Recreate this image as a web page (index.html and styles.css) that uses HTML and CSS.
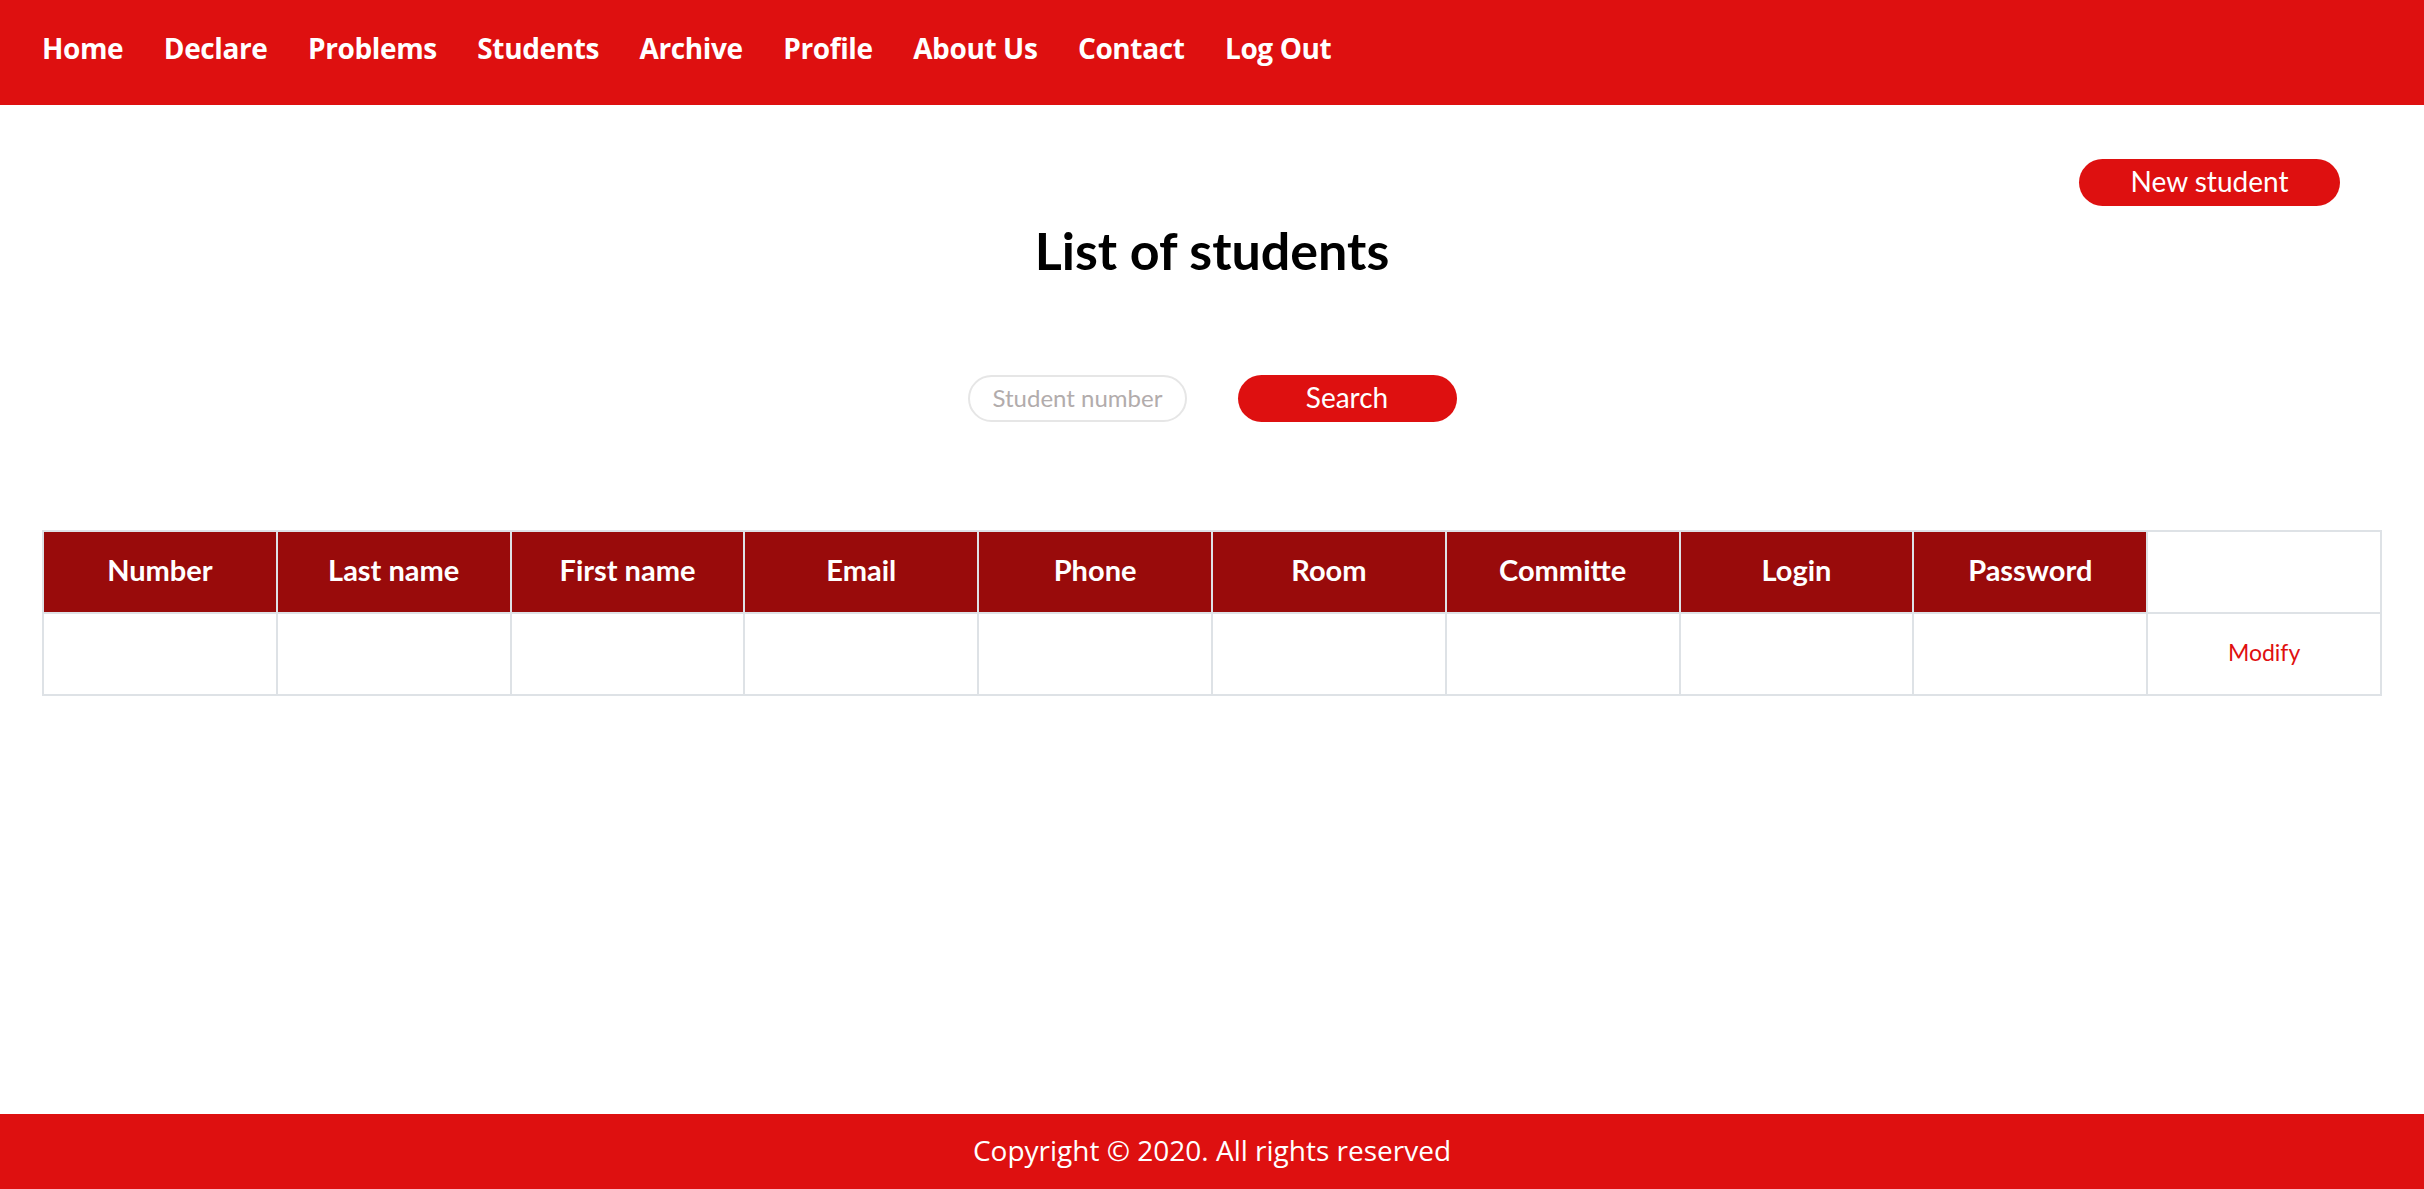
FILE: index.html
```html
<!DOCTYPE html>
<html lang="en">
<head>
<meta charset="utf-8">
<title>List of students</title>
<link rel="stylesheet" href="styles.css">
</head>
<body>
<nav class="topnav">
  <a href="#">Home</a>
  <a href="#">Declare</a>
  <a href="#">Problems</a>
  <a href="#">Students</a>
  <a href="#">Archive</a>
  <a href="#">Profile</a>
  <a href="#">About Us</a>
  <a href="#">Contact</a>
  <a href="#">Log Out</a>
</nav>
<main class="content">
  <div class="actions">
    <a class="btn btn-new" href="#">New student</a>
  </div>
  <h1 class="title">List of students</h1>
  <form class="search">
    <input class="search-input" type="text" placeholder="Student number">
    <button class="btn btn-search" type="button">Search</button>
  </form>
  <table class="students">
    <thead>
      <tr>
        <th>Number</th>
        <th>Last name</th>
        <th>First name</th>
        <th>Email</th>
        <th>Phone</th>
        <th>Room</th>
        <th>Committe</th>
        <th>Login</th>
        <th>Password</th>
        <th class="th-empty"></th>
      </tr>
    </thead>
    <tbody>
      <tr>
        <td></td><td></td><td></td><td></td><td></td>
        <td></td><td></td><td></td><td></td>
        <td class="td-action"><a class="modify" href="#">Modify</a></td>
      </tr>
    </tbody>
  </table>
</main>
<footer class="footer">Copyright © 2020. All rights reserved</footer>
</body>
</html>
```

FILE: styles.css
```css
* { box-sizing: border-box; }
html, body { margin: 0; padding: 0; }
body {
  min-height: 100vh;
  display: flex;
  flex-direction: column;
  background: #ffffff;
  font-family: "Lato", "Liberation Sans", sans-serif;
  color: #000;
}
.topnav {
  height: 105px;
  background: #de1010;
  display: flex;
  align-items: flex-start;
  gap: 40.5px;
  padding: 29px 0 0 42px;
}
.topnav a {
  color: #ffffff;
  text-decoration: none;
  font-family: "Open Sans", "Noto Sans", sans-serif;
  font-weight: 700;
  font-size: 28px;
  line-height: 38px;
  letter-spacing: -0.38px;
}
.content {
  flex: 1;
  padding: 0 42px;
}
.actions {
  display: flex;
  justify-content: flex-end;
  padding-right: 42px;
  margin-top: 54px;
}
.btn {
  display: flex;
  align-items: center;
  justify-content: center;
  height: 47px;
  border: none;
  border-radius: 24px;
  background: #de1010;
  color: #ffffff;
  font-family: "Lato", sans-serif;
  font-size: 28px;
  text-decoration: none;
  padding: 0 0 3px;
}
.btn-new { width: 261px; }
.title {
  margin: 19px 0 0;
  text-align: center;
  font-size: 52px;
  line-height: 51px;
  font-weight: 700;
}
.search {
  display: flex;
  justify-content: center;
  gap: 51px;
  margin-top: 99px;
}
.search-input {
  width: 219px;
  height: 47px;
  border: 2px solid #e6e6e6;
  border-radius: 24px;
  padding: 0 0 2px 23px;
  font-family: "Lato", sans-serif;
  font-size: 24px;
  outline: none;
}
.search-input::placeholder { color: #b2acac; }
.btn-search { width: 219px; }
.students {
  margin-top: 108px;
  width: 100%;
  table-layout: fixed;
  border-collapse: collapse;
  border: 2px solid #dee2e6;
}
.students th,
.students td {
  border: 2px solid #dee2e6;
  height: 82px;
  text-align: center;
  vertical-align: middle;
  padding: 0;
}
.students th {
  background: #990b0b;
  color: #ffffff;
  font-weight: 700;
  font-size: 29px;
  padding-bottom: 5px;
}
.students th.th-empty { background: #ffffff; }
.students td.td-action { padding-bottom: 4px; }
.modify {
  color: #e01010;
  text-decoration: none;
  font-size: 23px;
}
.footer {
  height: 75px;
  background: #de1010;
  color: #ffffff;
  text-align: center;
  font-family: "Open Sans", "Noto Sans", sans-serif;
  font-size: 28px;
  line-height: 38px;
  padding-top: 17px;
}
```
